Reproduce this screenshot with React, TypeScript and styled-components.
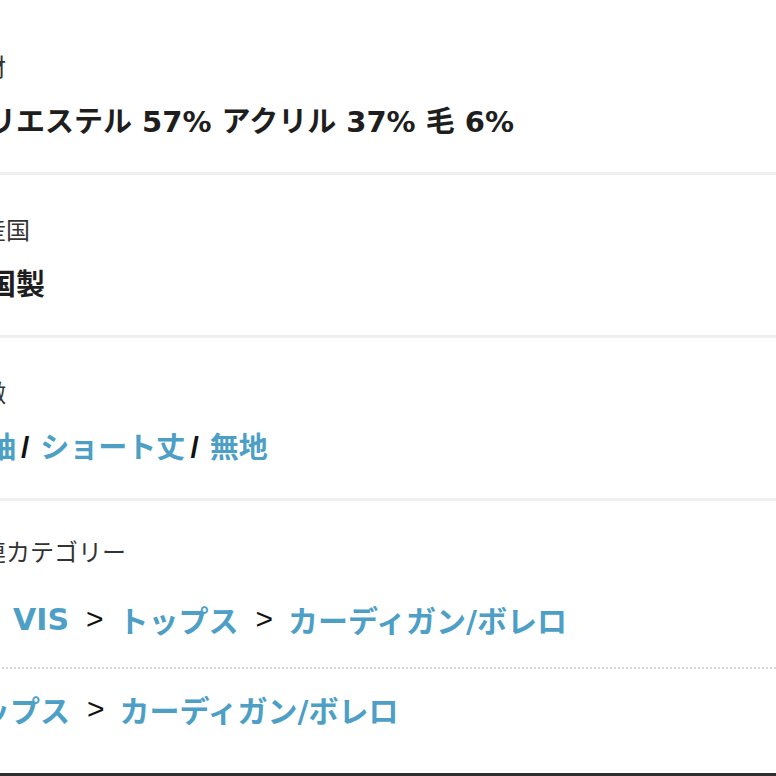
import React from "react";
import styled, { createGlobalStyle } from "styled-components";

const GlobalStyle = createGlobalStyle`
  html, body { margin: 0; padding: 0; background: #fff; }
  body {
    font-family: "Noto Sans CJK JP", "Noto Sans", sans-serif;
    overflow: hidden;
  }
`;

const Page = styled.div`
  width: 776px;
  height: 776px;
  overflow: hidden;
  display: flex;
  flex-direction: column;
  background: #fff;
`;

const List = styled.dl`
  flex: 1;
  margin: 0 0 0 -42px;
  padding: 12px 0 0;
  display: flex;
  flex-direction: column;
`;

const Section = styled.div<{ $divider?: boolean }>`
  padding: ${(p) => (p.$divider ? "38px 0 30px" : "34px 0 0")};
  border-bottom: ${(p) => (p.$divider ? "3px solid #efefef" : "none")};
`;

const Label = styled.dt`
  font-size: 24px;
  line-height: 32px;
  font-weight: 400;
  color: #333;
`;

const Value = styled.dd`
  margin: 20px 0 0;
  font-family: "DejaVu Sans", "Noto Sans CJK JP", sans-serif;
  font-size: 29px;
  line-height: 40px;
  font-weight: 700;
  color: #1e1e1e;
  white-space: nowrap;
`;

const Link = styled.a`
  color: #4d9fc6;
  font-weight: 700;
  text-decoration: none;
`;

const Slash = styled.span`
  font-family: "Liberation Sans", sans-serif;
  font-weight: 700;
  font-size: 30px;
  color: #111;
  margin: 0 11px 0 5px;
`;

const Crumbs = styled.dd`
  margin: 32px 0 0;
  display: flex;
  flex-direction: column;
`;

const CrumbLine = styled.div<{ $first?: boolean }>`
  display: flex;
  align-items: center;
  height: 40px;
  padding: ${(p) => (p.$first ? "0 0 28px 55px" : "20px 0 0")};
  margin-left: ${(p) => (p.$first ? "0" : "-8px")};
  border-bottom: ${(p) => (p.$first ? "2px dotted #d6d6d6" : "none")};
  font-family: "DejaVu Sans", "Noto Sans CJK JP", sans-serif;
  font-size: 30px;
  font-weight: 700;
  white-space: nowrap;
`;

const Arrow = styled.span`
  font-family: "Liberation Sans", sans-serif;
  font-weight: 400;
  font-size: 30px;
  color: #111;
  margin: 0 15px 0 17px;
`;

const BottomBar = styled.div`
  height: 3px;
  flex-shrink: 0;
  background: #2e2e2e;
`;

const crumbs: string[][] = [
  ["VIS", "トップス", "カーディガン/ボレロ"],
  ["トップス", "カーディガン/ボレロ"],
];

export default function App() {
  return (
    <Page>
      <GlobalStyle />
      <List>
        <Section $divider>
          <Label>素材</Label>
          <Value>ポリエステル 57% アクリル 37% 毛 6%</Value>
        </Section>
        <Section $divider>
          <Label>原産国</Label>
          <Value>中国製</Value>
        </Section>
        <Section $divider>
          <Label>特徴</Label>
          <Value>
            <Link>長袖</Link>
            <Slash>/</Slash>
            <Link>ショート丈</Link>
            <Slash>/</Slash>
            <Link>無地</Link>
          </Value>
        </Section>
        <Section>
          <Label>関連カテゴリー</Label>
          <Crumbs>
            {crumbs.map((line, i) => (
              <CrumbLine key={i} $first={i === 0}>
                {line.map((c, j) => (
                  <React.Fragment key={j}>
                    {j > 0 && <Arrow>&gt;</Arrow>}
                    <Link>{c}</Link>
                  </React.Fragment>
                ))}
              </CrumbLine>
            ))}
          </Crumbs>
        </Section>
      </List>
      <BottomBar />
    </Page>
  );
}
